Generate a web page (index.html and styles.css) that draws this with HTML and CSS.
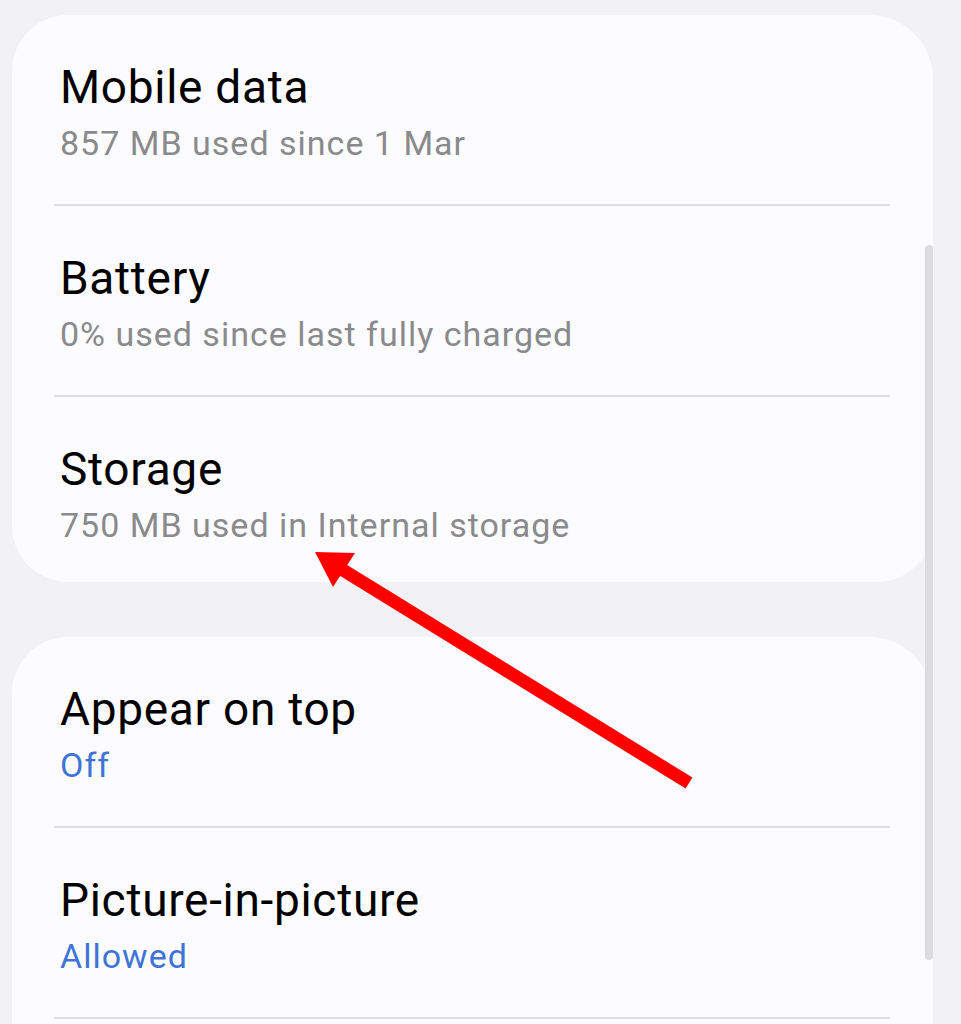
FILE: index.html
```html
<!DOCTYPE html>
<html>
<head>
<meta charset="utf-8">
<title>App info</title>
<link rel="stylesheet" href="styles.css">
</head>
<body>
	<div class="screen">
		<div class="card">
			<div class="item">
				<div class="title">Mobile data</div>
				<div class="summary">857 MB used since 1 Mar</div>
			</div>
			<div class="item">
				<div class="title">Battery</div>
				<div class="summary">0% used since last fully charged</div>
			</div>
			<div class="item">
				<div class="title">Storage</div>
				<div class="summary">750 MB used in Internal storage</div>
			</div>
		</div>
		<div class="card more">
			<div class="item">
				<div class="title">Appear on top</div>
				<div class="summary blue">Off</div>
			</div>
			<div class="item">
				<div class="title">Picture-in-picture</div>
				<div class="summary blue">Allowed</div>
			</div>
		</div>
		<div class="scrollbar"></div>
		<svg class="arrow" width="961" height="1024" viewBox="0 0 961 1024">
			<line x1="689" y1="783" x2="338" y2="567" stroke="#ff0000" stroke-width="13"/>
			<polygon points="315,552 355,553 333,587" fill="#ff0000"/>
		</svg>
	</div>
</body>
</html>
```
FILE: styles.css
```css
html, body{margin: 0;padding: 0;}
body{
	background: #f2f2f4;
	font-family: Roboto, "Noto Sans", sans-serif;
	overflow: hidden;
}
.screen{
	position: relative;
	width: 961px;
	height: 1024px;
	padding: 15px 28px 0 12px;
	box-sizing: border-box;
	overflow: hidden;
}
.card{
	background: #fcfcfe;
	border-radius: 56px 64px 56px 56px;
	margin-bottom: 55px;
}
.card.more{padding-bottom: 60px;}
.item{
	margin: 0 43px 0 42px;
	padding: 45px 6px 36px;
	border-bottom: 2px solid #dfdfe1;
}
.card:first-child .item:last-child{
	border-bottom: none;
	padding-bottom: 32px;
}
.title{
	font-size: 46px;
	line-height: 54px;
	letter-spacing: 0.7px;
	color: #000;
}
.summary{
	margin-top: 4px;
	font-size: 34px;
	line-height: 50px;
	letter-spacing: 1px;
	color: #8a8a8c;
}
.summary.blue{color: #3f74d6;}
.scrollbar{
	position: absolute;
	left: 925px;
	top: 245px;
	width: 8px;
	height: 715px;
	border-radius: 4px;
	background: #dcdcde;
}
.arrow{
	position: absolute;
	left: 0;
	top: 0;
}
```
